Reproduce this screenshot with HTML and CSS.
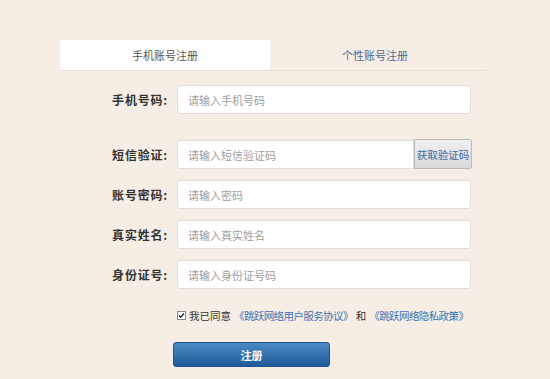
FILE: index.html
```html
<!DOCTYPE html>
<html lang="zh">
<head>
<meta charset="utf-8">
<link rel="stylesheet" href="styles.css">
</head>
<body>
<div class="page">
  <div class="tabs">
    <div class="tab active">手机账号注册</div>
    <div class="tab">个性账号注册</div>
  </div>
  <form class="form">
    <div class="row first">
      <label class="label">手机号码:</label>
      <input class="input" type="text" placeholder="请输入手机号码">
    </div>
    <div class="row sms">
      <label class="label">短信验证:</label>
      <div class="combo">
        <input class="input short" type="text" placeholder="请输入短信验证码">
        <button type="button" class="code-btn">获取验证码</button>
      </div>
    </div>
    <div class="row">
      <label class="label">账号密码:</label>
      <input class="input" type="password" placeholder="请输入密码">
    </div>
    <div class="row">
      <label class="label">真实姓名:</label>
      <input class="input" type="text" placeholder="请输入真实姓名">
    </div>
    <div class="row">
      <label class="label">身份证号:</label>
      <input class="input" type="text" placeholder="请输入身份证号码">
    </div>
    <div class="agree">
      <span class="check"><svg width="9" height="9" viewBox="0 0 9 9"><rect x="0.5" y="0.5" width="8" height="8" fill="#fff" stroke="#8a8a8a"/><path d="M2 4.6 L3.7 6.3 L7 2.6" fill="none" stroke="#222" stroke-width="1.4"/></svg></span>
      <span class="agree-text">我已同意</span>
      <a class="link">《跳跃网络用户服务协议》</a>
      <span class="agree-text">和</span>
      <a class="link">《跳跃网络隐私政策》</a>
    </div>
    <div class="submit-row">
      <button type="button" class="submit">注册</button>
    </div>
  </form>
</div>
</body>
</html>
```
FILE: styles.css
```css
* { box-sizing: border-box; }
html, body {
  margin: 0;
  padding: 0;
  background: #f6eee5;
  font-family: "Noto Sans CJK SC", "Noto Sans", sans-serif;
  font-size: 12px;
  color: #333;
}
.page {
  padding: 40px 0 0 60px;
}
.tabs {
  display: flex;
  width: 427px;
  height: 31px;
  border-bottom: 1px solid #e6ddd3;
}
.tab {
  width: 210px;
  display: flex;
  align-items: center;
  justify-content: center;
  font-size: 11px;
  color: #4a6a92;
}
.tab.active {
  background: #fff;
  color: #555;
}
.form {
  margin: 0;
  padding-top: 14px;
}
.row {
  display: flex;
  align-items: center;
  height: 29px;
  margin-bottom: 11px;
}
.row.first {
  margin-bottom: 26px;
}
.label {
  width: 108px;
  padding-right: 0;
  text-align: right;
  font-weight: bold;
  color: #333;
  font-size: 12px;
  margin-right: 9px;
  letter-spacing: 0.8px;
}
.input {
  width: 294px;
  height: 29px;
  border: 1px solid #e2ddd8;
  border-radius: 3px;
  background: #fff;
  padding: 0 10px;
  font-family: inherit;
  font-size: 11px;
  color: #333;
  outline: none;
}
.input::placeholder { color: #a0a0a0; }
.combo {
  display: flex;
  height: 29px;
}
.input.short {
  width: 237px;
  border-radius: 3px 0 0 3px;
}
.code-btn {
  width: 58px;
  height: 30px;
  margin-top: -1px;
  border: 1px solid #b9b9b9;
  background: linear-gradient(#f0f0f0, #d9d9d9);
  color: #3f6aa5;
  font-family: inherit;
  font-size: 10.5px;
  padding: 0;
  border-radius: 0 2px 2px 0;
}
.agree {
  display: flex;
  align-items: center;
  white-space: nowrap;
  padding-left: 117px;
  margin-top: 18px;
  height: 16px;
  font-size: 10.5px;
}
.check {
  display: flex;
  width: 9px;
  height: 9px;
  margin: 0 3px 0 0;
}
.agree-text { color: #333; }
.link {
  color: #3b73b5;
  margin: 0 3px;
  letter-spacing: -0.6px;
}
.submit-row {
  padding-left: 113px;
  margin-top: 19px;
}
.submit {
  width: 157px;
  height: 25px;
  border: 1px solid #1c5390;
  border-radius: 3px;
  background: linear-gradient(#4d89c8, #1f5a98);
  color: #fff;
  font-family: inherit;
  font-weight: bold;
  font-size: 11px;
  padding: 0;
}
```
